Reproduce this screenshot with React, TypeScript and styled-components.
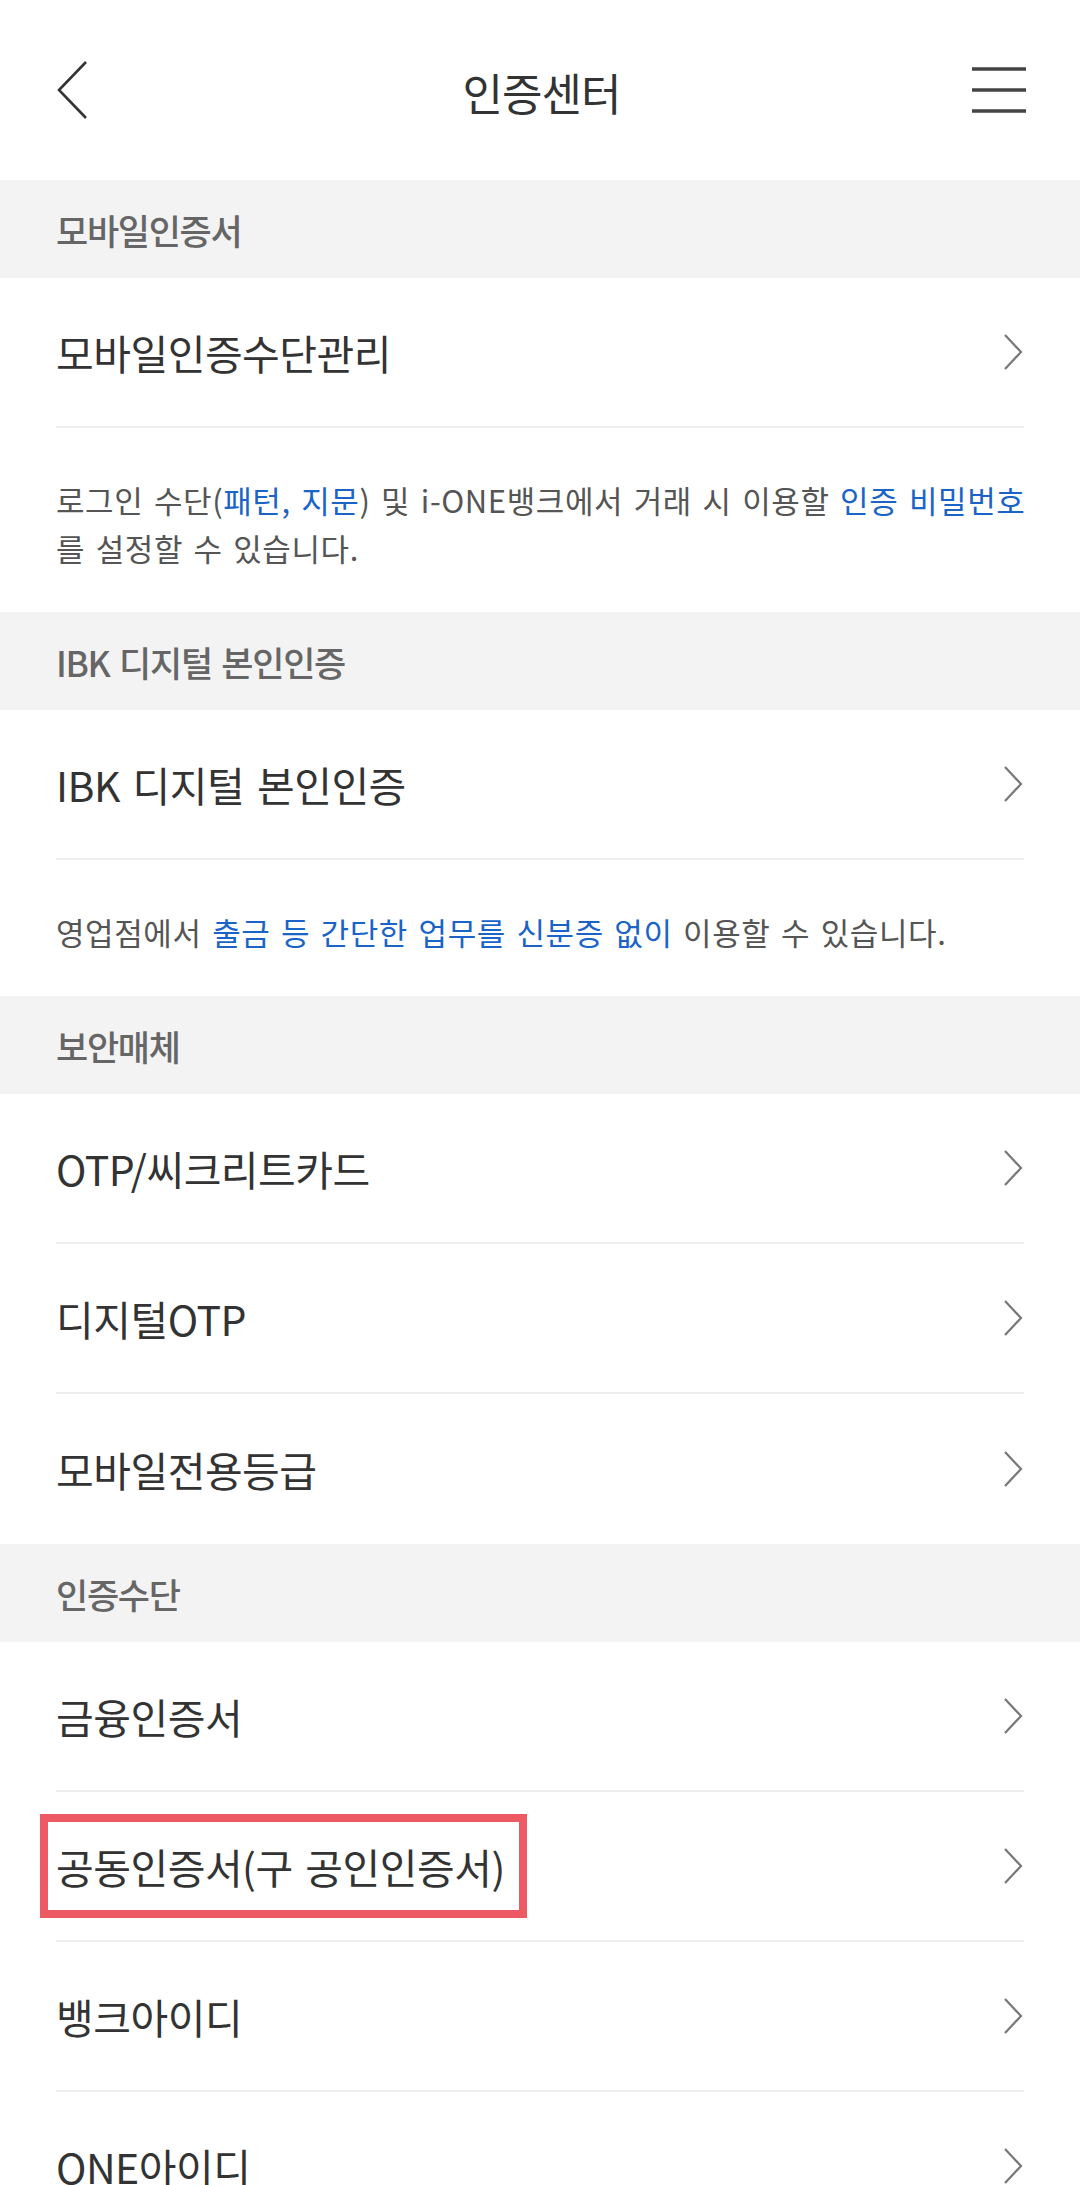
import React from "react";
import styled, { createGlobalStyle } from "styled-components";

const GlobalStyle = createGlobalStyle`
  html, body {
    margin: 0;
    padding: 0;
    background: #ffffff;
  }
  body {
    font-family: "Noto Sans CJK KR", "Noto Sans", "Liberation Sans", sans-serif;
    -webkit-font-smoothing: antialiased;
  }
  * { box-sizing: border-box; }
`;

const Page = styled.div`
  width: 1080px;
  height: 2185px;
  overflow: hidden;
  background: #fff;
  display: flex;
  flex-direction: column;
`;

const Header = styled.header`
  height: 180px;
  flex: 0 0 180px;
  display: grid;
  grid-template-columns: 120px 1fr 120px;
  align-items: center;
  padding: 0 53px 0 56px;
`;

const IconButton = styled.button<{ $align: "start" | "end" }>`
  border: 0;
  background: none;
  padding: 0;
  display: flex;
  justify-content: ${(p) => (p.$align === "start" ? "flex-start" : "flex-end")};
  align-items: center;
  height: 60px;
  cursor: pointer;
`;

const Title = styled.h1`
  margin: 0;
  text-align: center;
  font-size: 44px;
  font-weight: 400;
  letter-spacing: -1px;
  color: #333;
  line-height: 1;
  padding-top: 4px;
`;

const SectionHead = styled.div`
  height: 98px;
  flex: 0 0 98px;
  background: #f3f3f3;
  display: flex;
  align-items: center;
  padding: 0 56px;
  font-size: 35px;
  font-weight: 500;
  letter-spacing: -1.3px;
  word-spacing: 3px;
  color: #666;
`;

const List = styled.ul`
  list-style: none;
  margin: 0;
  padding: 0 56px;
`;

const Row = styled.li<{ $last?: boolean }>`
  height: 150px;
  display: flex;
  align-items: center;
  justify-content: space-between;
  border-bottom: ${(p) => (p.$last ? "none" : "2px solid #eeeeee")};
`;

const RowLabel = styled.span`
  font-size: 41px;
  font-weight: 400;
  letter-spacing: -0.5px;
  word-spacing: 4px;
  color: #333;
  line-height: 48px;
`;

const Marked = styled.span`
  display: inline-block;
  padding: 20px 14px 20px 8px;
  margin: -20px -14px -20px -8px;
  outline: 8px solid #ee5a63;
`;

const Desc = styled.p`
  margin: 0;
  padding: 48px 56px 40px;
  font-size: 31px;
  line-height: 48px;
  letter-spacing: 0.6px;
  word-spacing: 3px;
  color: #555;
  white-space: nowrap;
`;

const Em = styled.span`
  color: #1a64c8;
`;

const Chevron = () => (
  <svg width="22" height="38" viewBox="0 0 22 38" fill="none">
    <path d="M3 2 L19 19 L3 36" stroke="#777" strokeWidth="2.2" />
  </svg>
);

const BackIcon = () => (
  <svg width="32" height="58" viewBox="0 0 32 58" fill="none">
    <path d="M30 1 L3 29 L30 57" stroke="#333" strokeWidth="2.6" />
  </svg>
);

const MenuIcon = () => (
  <svg width="56" height="46" viewBox="0 0 56 46" fill="none">
    <path d="M1 2 H55 M1 23 H55 M1 44 H55" stroke="#444" strokeWidth="3.4" />
  </svg>
);

type Item = { label: React.ReactNode };

const Items = ({ items, lastPlain }: { items: Item[]; lastPlain?: boolean }) => (
  <List>
    {items.map((it, i) => (
      <Row key={i} $last={lastPlain && i === items.length - 1}>
        <RowLabel>{it.label}</RowLabel>
        <Chevron />
      </Row>
    ))}
  </List>
);

export default function App() {
  return (
    <>
      <GlobalStyle />
      <Page>
        <Header>
          <IconButton $align="start" aria-label="뒤로">
            <BackIcon />
          </IconButton>
          <Title>인증센터</Title>
          <IconButton $align="end" aria-label="메뉴">
            <MenuIcon />
          </IconButton>
        </Header>

        <SectionHead>모바일인증서</SectionHead>
        <Items items={[{ label: "모바일인증수단관리" }]} />
        <Desc>
          로그인 수단(<Em>패턴, 지문</Em>) 및 i-ONE뱅크에서 거래 시 이용할 <Em>인증 비밀번호</Em>
          <br />를 설정할 수 있습니다.
        </Desc>

        <SectionHead>IBK 디지털 본인인증</SectionHead>
        <Items items={[{ label: "IBK 디지털 본인인증" }]} />
        <Desc>
          영업점에서 <Em>출금 등 간단한 업무를 신분증 없이</Em> 이용할 수 있습니다.
        </Desc>

        <SectionHead>보안매체</SectionHead>
        <Items
          lastPlain
          items={[
            { label: "OTP/씨크리트카드" },
            { label: "디지털OTP" },
            { label: "모바일전용등급" },
          ]}
        />

        <SectionHead>인증수단</SectionHead>
        <Items
          items={[
            { label: "금융인증서" },
            { label: <Marked>공동인증서(구 공인인증서)</Marked> },
            { label: "뱅크아이디" },
            { label: "ONE아이디" },
          ]}
        />
      </Page>
    </>
  );
}
